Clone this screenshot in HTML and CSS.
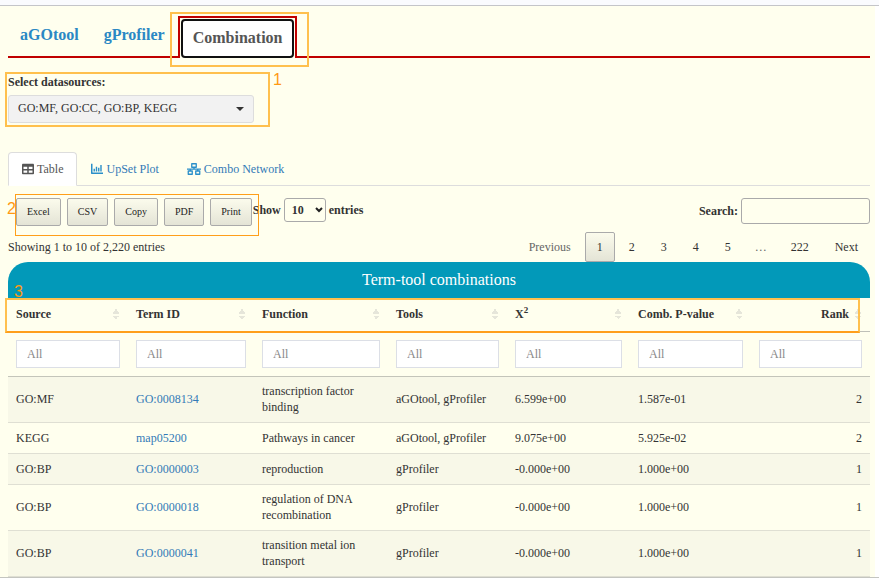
FILE: index.html
```html
<!DOCTYPE html>
<html lang="en">
<head>
<meta charset="utf-8">
<title>Term-tool combinations</title>
<link rel="stylesheet" href="styles.css">
</head>
<body>
<div class="frame">
<main class="page">
  <nav class="tabs">
    <a class="tab" href="#agotool">aGOtool</a>
    <a class="tab" href="#gprofiler">gProfiler</a>
    <a class="tab tab-active" href="#combination"><span class="tab-face">Combination</span><span class="mark mark-tab"></span></a>
  </nav>

  <section class="sources">
    <label class="sources-label" for="sources">Select datasources:</label>
    <div class="picker">
      <select id="sources" class="picker-select"><option>GO:MF, GO:CC, GO:BP, KEGG</option></select>
      <span class="caret"></span>
    </div>
    <span class="mark mark-sources"><span class="mark-num num-one">1</span></span>
  </section>

  <nav class="views">
    <a class="view view-active" href="#table"><svg class="icon" viewBox="0 0 512 512"><path fill="currentColor" d="M464 32H48C21 32 0 54 0 80v352c0 26 21 48 48 48h416c27 0 48-22 48-48V80c0-26-21-48-48-48zM224 416H64v-96h160zm0-160H64v-96h160zm224 160H288v-96h160zm0-160H288v-96h160z"/></svg>Table</a>
    <a class="view" href="#upset"><svg class="icon" viewBox="0 0 512 512"><path fill="#2a8fc9" d="M0 32h64v368h448v64H24c-14 0-24-10-24-24zM108 240h60v120h-60zM204 160h60v200h-60zM300 200h60v160h-60zM396 80h60v280h-60z"/></svg>UpSet Plot</a>
    <a class="view" href="#network"><svg class="icon icon-wide" viewBox="0 0 28 24"><path fill="none" stroke="#2a8fc9" stroke-width="2.6" stroke-linejoin="round" d="M9.5 1.5h9v7h-9zM2.5 16h8v6.5h-8zM17.500 16h8v6.500h-8zM14 8.500v3.700M0 12.200h28M6.500 12.200v3.800M21.500 12.200v3.800"/></svg>Combo Network</a>
  </nav>

  <div class="toolbar">
    <div class="exports">
      <button class="btn" type="button">Excel</button>
      <button class="btn" type="button">CSV</button>
      <button class="btn" type="button">Copy</button>
      <button class="btn" type="button">PDF</button>
      <button class="btn" type="button">Print</button>
      <span class="mark mark-exports"><span class="mark-num num-two">2</span></span>
    </div>
    <label class="length">Show
      <span class="length-box"><select class="length-select"><option>10</option></select><svg class="chevron" viewBox="0 0 8 6"><path d="M1 1l3 3 3-3" fill="none" stroke="#222" stroke-width="2"/></svg></span>
      entries</label>
    <label class="search">Search:<input class="search-input" type="search"></label>
  </div>

  <div class="status">
    <span>Showing 1 to 10 of 2,220 entries</span>
    <nav class="pager">
      <a class="pg pg-off" href="#prev">Previous</a>
      <a class="pg pg-current" href="#1">1</a>
      <a class="pg" href="#2">2</a>
      <a class="pg" href="#3">3</a>
      <a class="pg" href="#4">4</a>
      <a class="pg" href="#5">5</a>
      <span class="pg pg-off pg-gap">…</span>
      <a class="pg" href="#222">222</a>
      <a class="pg" href="#next">Next</a>
    </nav>
  </div>

  <div class="grid-wrap">
  <table class="grid">
    <caption>Term-tool combinations</caption>
    <colgroup><col class="c1"><col class="c2"><col class="c3"><col class="c4"><col class="c5"><col class="c6"><col class="c7"></colgroup>
    <thead>
      <tr class="heads">
        <th class="sort">Source</th><th class="sort">Term ID</th><th class="sort">Function</th><th class="sort">Tools</th><th class="sort">X<sup>2</sup></th><th class="sort">Comb. P-value</th><th class="sort num">Rank</th>
      </tr>
      <tr class="filters">
        <td><input aria-label="Source" placeholder="All"></td><td><input aria-label="Term ID" placeholder="All"></td><td><input aria-label="Function" placeholder="All"></td><td><input aria-label="Tools" placeholder="All"></td><td><input aria-label="X2" placeholder="All"></td><td><input aria-label="Comb. P-value" placeholder="All"></td><td><input aria-label="Rank" placeholder="All"></td>
      </tr>
    </thead>
    <tbody>
      <tr><td>GO:MF</td><td><a href="#t1">GO:0008134</a></td><td>transcription factor binding</td><td>aGOtool, gProfiler</td><td>6.599e+00</td><td>1.587e-01</td><td class="num">2</td></tr>
      <tr><td>KEGG</td><td><a href="#t2">map05200</a></td><td>Pathways in cancer</td><td>aGOtool, gProfiler</td><td>9.075e+00</td><td>5.925e-02</td><td class="num">2</td></tr>
      <tr><td>GO:BP</td><td><a href="#t3">GO:0000003</a></td><td>reproduction</td><td>gProfiler</td><td>-0.000e+00</td><td>1.000e+00</td><td class="num">1</td></tr>
      <tr><td>GO:BP</td><td><a href="#t4">GO:0000018</a></td><td>regulation of DNA recombination</td><td>gProfiler</td><td>-0.000e+00</td><td>1.000e+00</td><td class="num">1</td></tr>
      <tr><td>GO:BP</td><td><a href="#t5">GO:0000041</a></td><td>transition metal ion transport</td><td>gProfiler</td><td>-0.000e+00</td><td>1.000e+00</td><td class="num">1</td></tr>
    </tbody>
  </table>
  <span class="mark mark-heads"><span class="mark-num num-three">3</span></span>
  </div>
</main>
</div>
</body>
</html>
```
FILE: styles.css
```css
*, *::before { box-sizing: border-box; }
body {
  margin: 0;
  background: #fff;
  color: #333;
  font: 12px/16px "Liberation Serif", serif;
}
a { color: #337ab7; text-decoration: none; }
input, select, button { font: inherit; color: inherit; }
.frame { border-bottom: 1px solid #c4c5c0; }
.frame::before {
  content: "";
  display: block;
  height: 6px;
  border-bottom: 1px solid #c4c5c9;
  background: #fafbfe;
}
.page {
  margin-right: 4px;
  padding: 9px 5px 0 8px;
  background: #ffffee;
}

/* main tabs */
.tabs {
  display: flex;
  align-items: flex-end;
  height: 43px;
  border-bottom: 2px solid #c00000;
  font-size: 16px;
  line-height: 24px;
  font-weight: bold;
}
.tab { padding: 0 13px 9px 12px; color: #2a88c4; }
.tab-active {
  position: relative;
  margin-bottom: -2px;
  padding: 1px 1px 0;
  border: 2px solid #c00000;
  border-bottom: 0;
  background: #ffffee;
  color: #555;
}
.tab-face {
  display: block;
  padding: 5px 10px 6px;
  border: 2px solid #101010;
  border-radius: 4px;
  background: #fff;
}

/* numbered highlight frames */
.mark { position: absolute; border: 2px solid #ffc04d; pointer-events: none; }
.mark-num {
  position: absolute;
  color: #ff9912;
  font: 16px/16px "Liberation Sans", sans-serif;
}
.mark-tab { inset: -6px -14px -9px -10px; }
.mark-sources { top: 14px; left: -3px; width: 265px; height: 55px; }
.mark-exports { inset: -4px -7px -10px -1px; border: 1px solid #ff9f1a; }
.mark-heads { top: 36px; left: -3px; right: 10px; height: 35px; border-bottom-color: #ff9f1a; }
.num-one { top: -2px; right: -14px; }
.num-two { top: 6px; left: -9px; }
.num-three { top: -16px; left: 7px; }

/* data sources */
.sources { position: relative; padding-top: 16px; }
.sources-label { display: block; font-weight: bold; margin-bottom: 5px; }
.picker { position: relative; width: 246px; }
.picker-select {
  display: block;
  width: 100%;
  height: 28px;
  padding: 0 9px 2px;
  appearance: none;
  border: 1px solid #ddd;
  border-radius: 3px;
  background: #f2f2f2;
}
.caret {
  position: absolute;
  top: 12px;
  right: 10px;
  border: 4px solid transparent;
  border-top-color: #333;
  border-bottom: 0;
}

/* view tabs */
.views { display: flex; height: 34px; margin-top: 29px; border-bottom: 1px solid #ddd; }
.view { display: flex; align-items: center; height: 34px; padding: 0 13px; border: 1px solid transparent; }
.view-active { border-color: #ddd; border-bottom-color: #fff; border-radius: 4px 4px 0 0; background: #fff; color: #555; }
.icon { width: 12px; height: 12px; margin-right: 3px; }
.icon-wide { width: 14px; }

/* table controls */
.toolbar { display: flex; padding: 12px 0 0 8px; }
.exports { position: relative; display: flex; gap: 6px; height: 28px; }
.btn {
  padding: 0 10px;
  border: 1px solid #aaa;
  border-radius: 2px;
  background: linear-gradient(#fbfbec, #e4e4d6);
  color: #222;
  font-size: 10px;
}
.length { display: flex; align-items: center; gap: 3px; height: 24px; margin-left: 1px; font-weight: bold; }
.length-box { position: relative; }
.length-select { display: block; width: 42px; height: 24px; padding: 0 7px; appearance: none; border: 1px solid #aaa; border-radius: 3px; background: transparent; }
.chevron { position: absolute; top: 9px; right: 3px; width: 8px; height: 6px; }
.search { display: flex; align-items: center; gap: 3px; margin-left: auto; height: 26px; font-weight: bold; }
.search-input { width: 129px; height: 26px; border: 1px solid #aaa; border-radius: 3px; background: transparent; }
.status { display: flex; justify-content: space-between; align-items: center; height: 30px; margin-top: 6px; }
.pager { display: flex; gap: 2px; }
.pg { height: 30px; padding: 6px 11px; border: 1px solid transparent; border-radius: 2px; color: #333; }
.pg-off { color: #666; }
.pg-gap { padding: 6px 9px; }
.pg-current { border-color: #aaa; background: linear-gradient(#fbfbec, #e4e4d6); }

/* results table */
.grid-wrap { position: relative; }
.grid { width: 100%; table-layout: fixed; border-collapse: separate; border-spacing: 0; }
.grid caption { height: 36px; border-radius: 20px 20px 0 0; background: #0299b9; color: #fff; font-size: 16px; line-height: 36px; }
.c1 { width: 120px; } .c2 { width: 126px; } .c3 { width: 134px; } .c4 { width: 119px; } .c5 { width: 123px; } .c6 { width: 121px; }
.grid th, .grid td { height: 31px; padding: 6px 8px 7px; text-align: left; }
.grid .num { text-align: right; }
.grid .heads th { height: 34px; border-bottom: 1px solid #bfc0b8; }
sup { font-size: 9px; line-height: 0; }
.sort {
  background:
    conic-gradient(from 150deg at 50% 0, #e6e6da 60deg, transparent 0) right 9px top 10px / 6px 6px no-repeat,
    conic-gradient(from -45deg at 50% 100%, #e6e6da 90deg, transparent 0) right 9px top 18px / 6px 3px no-repeat;
}
.grid .num.sort { padding-right: 21px; }
.grid .filters td { padding: 8px; border-bottom: 1px solid #c4c5ba; }
.filters input { display: block; width: 100%; height: 28px; padding: 0 10px; border: 1px solid #dcdfe6; background: #fff; }
.filters input::placeholder { color: #888; }
tbody td { border-bottom: 1px solid #dfdfd3; }
tbody tr:nth-child(odd) { background: #f8f8e8; }
```
